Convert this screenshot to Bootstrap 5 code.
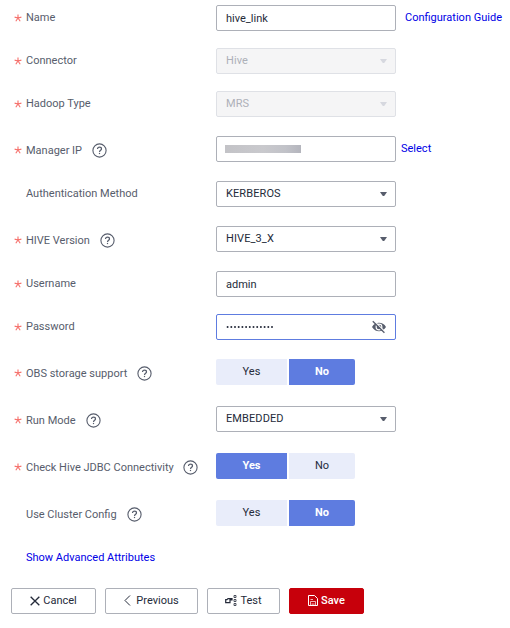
<!DOCTYPE html>
<html lang="en">
<head>
    <meta charset="UTF-8">
    <meta name="viewport" content="width=device-width, initial-scale=1.0">
    <title>Create Link</title>
    <link href="https://cdn.jsdelivr.net/npm/bootstrap@5.3.0/dist/css/bootstrap.min.css" rel="stylesheet">
    <style>
        body {
            font-family: Roboto, sans-serif;
            font-size: 11px;
            line-height: 14px;
            color: #575d6c;
            background-color: #fff;
            overflow: hidden;
        }
        .link-form {
            padding: 5px 0 0 14px;
        }
        .field-row {
            height: 26px;
            margin-bottom: 17px;
        }
        .gap-md {
            margin-bottom: 19px;
        }
        .gap-lg {
            margin-bottom: 21px;
        }
        .field-label {
            width: 202px;
        }
        .has-help {
            padding-top: 4px;
        }
        .star {
            width: 12px;
            height: 14px;
        }
        .star svg {
            display: block;
            margin-top: 3px;
        }
        .has-help .star svg {
            margin-top: 2px;
        }
        .help-icon {
            width: 15px;
            height: 15px;
            margin: 0 0 1px 10px;
        }
        .form-control,
        .select-box {
            width: 180px;
            height: 26px;
            padding: 0 8px 0 9px;
            font-size: 11px;
            line-height: 14px;
            color: #252b3a;
            background-color: #fff;
            border: 1px solid #adb0b8;
            border-radius: 2px;
        }
        .select-box {
            padding-bottom: 1px;
            letter-spacing: 0.1px;
        }
        .select-box.disabled {
            color: #adb0b8;
            background-color: #f5f5f6;
            border-color: #dfe1e6;
        }
        .caret {
            width: 7px;
            height: 4px;
            margin-top: 1px;
            background-color: #575d6c;
            clip-path: polygon(0 0, 100% 0, 60% 100%, 40% 100%);
        }
        .disabled .caret {
            background-color: #d6d8df;
        }
        .masked-ip {
            width: 76px;
            height: 8px;
            margin-left: -1px;
            background: linear-gradient(90deg, #c3c3c7, #c9c9cd 50%, #c1c2c8 80%, #b4b5bd);
        }
        .password-box {
            border-color: #5e7ce0;
        }
        .side-link {
            color: #0000e6;
            text-decoration: none;
        }
        .toggle {
            gap: 2px;
        }
        .toggle .btn {
            width: 66px;
            height: 26px;
            padding: 0;
            font-size: 11px;
            line-height: 14px;
            color: #252b3a;
            background-color: #e9edfa;
            border: 0;
            border-radius: 0 2px 2px 0;
        }
        .toggle .btn:first-child {
            width: 71px;
            border-radius: 2px 0 0 2px;
        }
        .toggle .btn.active {
            color: #fff;
            font-weight: 700;
            background-color: #5e7ce0;
        }
        .advanced {
            height: 14px;
            margin: 25px 0 23px 12px;
        }
        .actions {
            gap: 9px;
            margin-left: -3px;
        }
        .actions .btn {
            height: 26px;
            padding: 0 0 1px;
            font-size: 11px;
            line-height: 14px;
            color: #252b3a;
            border: 1px solid #adb0b8;
            border-radius: 2px;
        }
        .actions .btn-save {
            color: #fff;
            font-weight: 500;
            background-color: #c7000b;
            border-color: #c7000b;
        }
        .btn-cancel { width: 85px; }
        .btn-previous { width: 93px; }
        .btn-test { width: 73px; }
        .btn-save { width: 75px; }
    </style>
</head>
<body>
    <svg class="d-none">
        <symbol id="help" viewBox="0 0 15 15">
            <circle cx="7.5" cy="7.5" r="6.6" fill="none" stroke="#575d6c" stroke-width="1.1"/>
            <path d="M5.5 6.1C5.5 4.8 6.3 4.1 7.5 4.1S9.5 4.8 9.5 5.9C9.5 7.2 7.5 7.3 7.5 8.9" fill="none" stroke="#575d6c" stroke-width="1.2"/>
            <path d="M6.9 9.9h1.2v1.2H6.9z" fill="#575d6c"/>
        </symbol>
        <symbol id="required" viewBox="0 0 8 8">
            <path d="M4 .5V4M.6 3.1L4 4L7.4 3.1M1.8 7.2L4 4L6.2 7.2" fill="none" stroke="#f66f6a" stroke-width="1.1"/>
        </symbol>
    </svg>

    <form class="link-form">
        <div class="field-row d-flex align-items-center">
            <div class="field-label d-flex align-items-center"><span class="star"><svg width="8" height="8"><use href="#required"/></svg></span>Name</div>
            <input type="text" class="form-control" value="hive_link">
            <a href="#" class="side-link" style="margin-left: 9px">Configuration Guide</a>
        </div>
        <div class="field-row d-flex align-items-center">
            <div class="field-label d-flex align-items-center"><span class="star"><svg width="8" height="8"><use href="#required"/></svg></span>Connector</div>
            <div class="select-box disabled d-flex align-items-center justify-content-between">Hive<span class="caret"></span></div>
        </div>
        <div class="field-row gap-md d-flex align-items-center">
            <div class="field-label d-flex align-items-center"><span class="star"><svg width="8" height="8"><use href="#required"/></svg></span>Hadoop Type</div>
            <div class="select-box disabled d-flex align-items-center justify-content-between">MRS<span class="caret"></span></div>
        </div>
        <div class="field-row gap-md d-flex align-items-center">
            <div class="field-label has-help d-flex align-items-center"><span class="star"><svg width="8" height="8"><use href="#required"/></svg></span>Manager IP<svg class="help-icon"><use href="#help"/></svg></div>
            <div class="form-control d-flex align-items-center"><span class="masked-ip"></span></div>
            <a href="#" class="side-link" style="margin-left: 5px">Select</a>
        </div>
        <div class="field-row gap-md d-flex align-items-center">
            <div class="field-label d-flex align-items-center"><span class="star"></span>Authentication Method</div>
            <div class="select-box d-flex align-items-center justify-content-between">KERBEROS<span class="caret"></span></div>
        </div>
        <div class="field-row gap-md d-flex align-items-center">
            <div class="field-label has-help d-flex align-items-center"><span class="star"><svg width="8" height="8"><use href="#required"/></svg></span>HIVE Version<svg class="help-icon"><use href="#help"/></svg></div>
            <div class="select-box d-flex align-items-center justify-content-between">HIVE_3_X<span class="caret"></span></div>
        </div>
        <div class="field-row d-flex align-items-center">
            <div class="field-label d-flex align-items-center"><span class="star"><svg width="8" height="8"><use href="#required"/></svg></span>Username</div>
            <input type="text" class="form-control" value="admin">
        </div>
        <div class="field-row gap-md d-flex align-items-center">
            <div class="field-label d-flex align-items-center"><span class="star"><svg width="8" height="8"><use href="#required"/></svg></span>Password</div>
            <div class="form-control password-box d-flex align-items-center justify-content-between">
                <svg width="50" height="4" viewBox="0 0 50 4">
                    <path d="M1.6 2H47" stroke="#252b3a" stroke-width="2" stroke-linecap="round" stroke-dasharray="0 3.7"/>
                </svg>
                <svg width="16" height="14" viewBox="0 0 16 14">
                    <path d="M1 7C4.2 1.4 11.8 1.4 15 7C11.8 12.6 4.2 12.6 1 7Z" fill="#575d6c"/>
                    <circle cx="8" cy="7" r="2.9" fill="none" stroke="#fff" stroke-width="1.1"/>
                    <path d="M2.8 .6L14.4 12.2" stroke="#fff" stroke-width="1.2"/>
                    <path d="M1.8 1.2L13.4 12.8" stroke="#575d6c" stroke-width="1.3"/>
                </svg>
            </div>
        </div>
        <div class="field-row gap-lg d-flex align-items-center">
            <div class="field-label has-help d-flex align-items-center"><span class="star"><svg width="8" height="8"><use href="#required"/></svg></span>OBS storage support<svg class="help-icon"><use href="#help"/></svg></div>
            <div class="toggle d-flex">
                <button type="button" class="btn">Yes</button>
                <button type="button" class="btn active">No</button>
            </div>
        </div>
        <div class="field-row gap-lg d-flex align-items-center">
            <div class="field-label has-help d-flex align-items-center"><span class="star"><svg width="8" height="8"><use href="#required"/></svg></span>Run Mode<svg class="help-icon"><use href="#help"/></svg></div>
            <div class="select-box d-flex align-items-center justify-content-between">EMBEDDED<span class="caret"></span></div>
        </div>
        <div class="field-row gap-lg d-flex align-items-center">
            <div class="field-label has-help d-flex align-items-center"><span class="star"><svg width="8" height="8"><use href="#required"/></svg></span>Check Hive JDBC Connectivity<svg class="help-icon" style="margin-left: 9px"><use href="#help"/></svg></div>
            <div class="toggle d-flex">
                <button type="button" class="btn active">Yes</button>
                <button type="button" class="btn">No</button>
            </div>
        </div>
        <div class="field-row mb-0 d-flex align-items-center">
            <div class="field-label has-help d-flex align-items-center"><span class="star"></span>Use Cluster Config<svg class="help-icon"><use href="#help"/></svg></div>
            <div class="toggle d-flex">
                <button type="button" class="btn">Yes</button>
                <button type="button" class="btn active">No</button>
            </div>
        </div>

        <div class="advanced d-flex"><a href="#" class="side-link">Show Advanced Attributes</a></div>

        <div class="actions d-flex">
            <button type="button" class="btn btn-cancel d-flex align-items-center justify-content-center">
                <svg width="10" height="10" viewBox="0 0 9 9" style="margin-right: 3px"><path d="M.6 .6L8.4 8.4M8.4 .6L.6 8.4" stroke="#252b3a" stroke-width="1.2"/></svg>Cancel
            </button>
            <button type="button" class="btn btn-previous d-flex align-items-center justify-content-center">
                <svg width="8" height="11" viewBox="0 0 8 11" style="margin-right: 4px"><path d="M6 .5L1 5.5L6 10.5" fill="none" stroke="#252b3a"/></svg>Previous
            </button>
            <button type="button" class="btn btn-test d-flex align-items-center justify-content-center">
                <svg width="12" height="12" viewBox="0 0 12 12" style="margin-right: 3px">
                    <path d="M.7 4.6H2L3 3.6H7V4.8H5V7.6H.7Z" fill="none" stroke="#252b3a" stroke-width="1.2"/>
                    <path d="M9 .5h2v2H9zM9 4.5h2v2H9zM9 8.5h2v2H9z" fill="none" stroke="#252b3a" stroke-width=".8"/>
                </svg>Test
            </button>
            <button type="button" class="btn btn-save d-flex align-items-center justify-content-center">
                <svg width="10" height="11" viewBox="0 0 10 11" style="margin-right: 3px">
                    <path d="M.5 .5H6.5L9.5 3.5V10.5H.5Z" fill="none" stroke="#fff"/>
                    <path d="M2.5 10V6.5H7.5V10M2.5 4.5H5M4.2 10V8.3M5.9 10V8.3" fill="none" stroke="#fff" stroke-width=".7"/>
                </svg>Save
            </button>
        </div>
    </form>

    <script src="https://cdn.jsdelivr.net/npm/bootstrap@5.3.0/dist/js/bootstrap.bundle.min.js"></script>
</body>
</html>
